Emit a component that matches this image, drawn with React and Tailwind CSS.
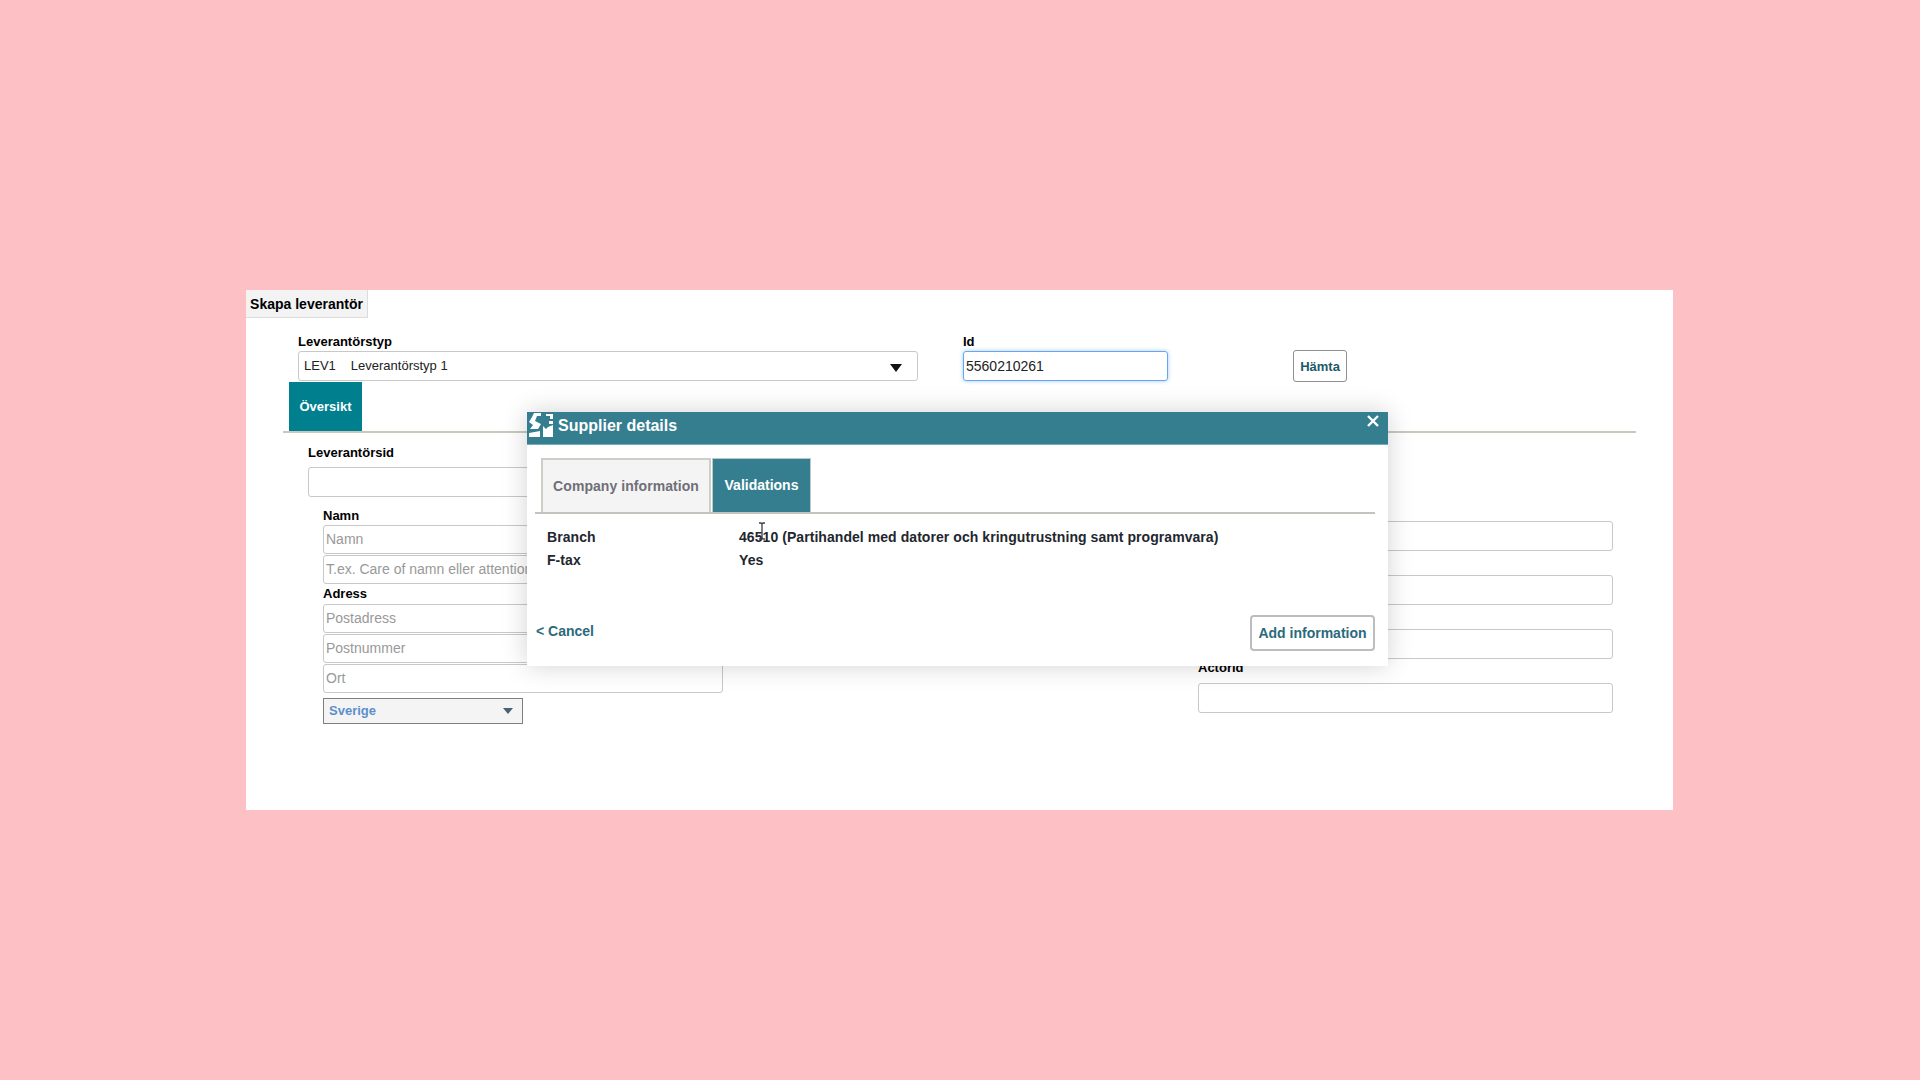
const sans = 'font-["Liberation_Sans",Arial,sans-serif]';

function Field({ placeholder, className = '' }) {
  return (
    <div className={`h-[29px] rounded-[3px] border border-[#c8c8c8] bg-white px-[2px] text-[14px] leading-[27px] text-[#999999] ${className}`}>
      {placeholder}
    </div>
  );
}

function Logo() {
  return (
    <svg width="26" height="26" viewBox="0 0 26 26" fill="#ffffff">
      <path d="M5 0h7v3H8L6 8l6 3-3 5H1l3-4-4-3 3-5z" />
      <path d="M0 20l11-2v6H0z" />
      <path d="M14 13l3 3 2-2 5-2v12H14z" />
      <path d="M17 1h7v5h-3V3h-4z" />
      <path d="M20 8h4v3h-4z" />
    </svg>
  );
}

function Modal() {
  return (
    <div className="absolute left-[527px] top-[412px] h-[254px] w-[861px] bg-white shadow-[0_0_24px_rgba(0,0,0,0.18)]">
      <div className="relative flex h-[33px] items-start border-b border-[#6fb0bb] bg-[#357e8f] text-white">
        <div className="ml-[2px] mr-[3px] mt-[1px]"><Logo /></div>
        <span className="mt-[2px] text-[16px] font-bold">Supplier details</span>
        <svg className="absolute right-[9px] top-[3px]" width="12" height="12" viewBox="0 0 12 12" stroke="#ffffff" strokeWidth="2.4">
          <path d="M1 1l10 10M11 1L1 11" />
        </svg>
      </div>
      <div className="ml-[8px] mr-[13px] mt-[13px] flex border-b-2 border-[#c4c3bd] pl-[6px]">
        <div className="flex h-[54px] w-[170px] items-center justify-center border-2 border-b-0 border-[#cfcdc8] bg-[#f5f4f5] text-[14px] font-bold tracking-[0.06px] text-[#6f6f78]">
          Company information
        </div>
        <div className="ml-[1px] flex h-[54px] w-[99px] items-center justify-center border border-b-0 border-[#b9c9cc] bg-[#357e8f] text-[14px] font-bold text-white">
          Validations
        </div>
      </div>
      <div className="mt-[12px] pl-[20px] text-[14px] font-bold leading-[23px] tracking-[0.06px] text-[#23262e]">
        <div className="flex">
          <span className="w-[192px]">Branch</span>
          <span>46510 (Partihandel med datorer och kringutrustning samt programvara)</span>
        </div>
        <div className="flex">
          <span className="w-[192px]">F-tax</span>
          <span>Yes</span>
        </div>
      </div>
      <div className="mt-[43px] flex items-center justify-between pl-[9px] pr-[13px]">
        <span className="-mt-[3px] text-[14px] font-bold text-[#2b6a7c]">&lt; Cancel</span>
        <button className="h-[36px] w-[125px] rounded-[4px] border-2 border-[#bdbdbd] bg-white text-[14px] font-bold text-[#2b6a7c]">
          Add information
        </button>
      </div>
      {/* I-beam cursor from the recording */}
      <svg className="absolute left-[231px] top-[110px]" width="8" height="18" viewBox="0 0 8 18" fill="none" stroke="#3a3e44" strokeWidth="1.3">
        <path d="M1 1h2l1 1 1-1h2M4 2v14M1 17h2l1-1 1 1h2" />
      </svg>
    </div>
  );
}

export default function App() {
  return (
    <div className={`relative h-[1080px] bg-[#fdc0c4] pl-[246px] pt-[290px] ${sans}`}>
      <div className="h-[520px] w-[1427px] bg-white text-black">
        <div className="flex h-[28px] w-[122px] items-center justify-center border-b border-r border-[#dcdcdc] bg-[#f3f3f4] pt-[2px] text-[14px] font-bold">
          Skapa leverantör
        </div>

        <div className="mt-[16px] flex pl-[52px]">
          <div className="w-[620px]">
            <div className="pb-[2px] text-[13px] font-bold leading-[15px]">Leverantörstyp</div>
            <div className="flex h-[30px] items-center justify-between rounded-[3px] border border-[#c8c8c8] pl-[5px] pr-[15px] text-[13px] text-[#222222]">
              <span><span className="mr-[15px]">LEV1</span>Leverantörstyp 1</span>
              <svg className="mt-[3px]" width="12" height="8" viewBox="0 0 12 8" fill="#111111"><path d="M0 0h12L6 8z" /></svg>
            </div>
          </div>
          <div className="ml-[45px] w-[205px]">
            <div className="pb-[2px] text-[13px] font-bold leading-[15px]">Id</div>
            <div className="h-[30px] rounded-[3px] border border-[#66a6ee] pl-[2px] text-[14px] leading-[28px] text-[#222222] shadow-[0_0_4px_rgba(102,166,238,0.6)]">
              5560210261
            </div>
          </div>
          <button className="-mb-[1px] ml-[125px] h-[32px] w-[54px] self-end rounded-[3px] border border-[#8f8f8f] pt-[1px] text-[13px] font-bold text-[#1d5a69]">
            Hämta
          </button>
        </div>

        <div className="mx-[37px] mt-[1px] border-b-2 border-[#c9c8bd] pl-[6px]">
          <div className="flex h-[49px] w-[73px] items-center justify-center bg-[#00808f] text-[13px] font-bold text-white">
            Översikt
          </div>
        </div>

        <div className="mt-[12px] flex">
          <div className="ml-[62px] w-[414px]">
            <div className="text-[13px] font-bold leading-[16px]">Leverantörsid</div>
            <div className="mt-[6px] h-[30px] rounded-[3px] border border-[#c8c8c8]" />
            <div className="ml-[15px] mt-[9px] w-[400px]">
              <div className="text-[13px] font-bold leading-[19px]">Namn</div>
              <Field placeholder="Namn" />
              <Field placeholder="T.ex. Care of namn eller attention" className="mt-[1px]" />
              <div className="text-[13px] font-bold leading-[20px]">Adress</div>
              <Field placeholder="Postadress" />
              <Field placeholder="Postnummer" className="mt-[1px]" />
              <Field placeholder="Ort" className="mt-[1px]" />
              <div className="mt-[5px] flex h-[26px] w-[200px] items-center justify-between border border-[#7f7f7f] bg-[#f4f4f4] pl-[5px] pr-[9px] text-[13px] font-bold text-[#5b8fce]">
                Sverige
                <svg width="10" height="6" viewBox="0 0 10 6" fill="#4d6072"><path d="M0 0h10L5 6z" /></svg>
              </div>
            </div>
          </div>

          <div className="ml-[476px] flex w-[415px] flex-col pt-[76px]">
            <Field className="h-[30px]" />
            <Field className="mt-[24px] h-[30px]" />
            <Field className="mt-[24px] h-[30px]" />
            <div className="mb-[7px] mt-[1px] text-[13px] font-bold leading-[16px]">Actorid</div>
            <Field className="h-[30px]" />
          </div>
        </div>
      </div>
      <Modal />
    </div>
  );
}
